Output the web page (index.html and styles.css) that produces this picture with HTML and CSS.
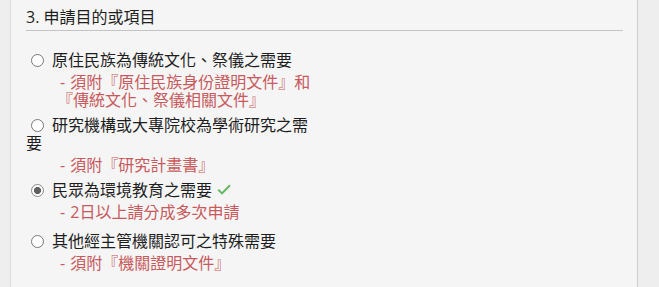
FILE: index.html
```html
<!DOCTYPE html>
<html lang="zh-Hant">
<head>
<meta charset="utf-8">
<title>申請目的或項目</title>
<link rel="stylesheet" href="styles.css">
</head>
<body>
<div class="page">
  <section class="panel">
    <h3 class="panel-title">3. 申請目的或項目</h3>
    <div class="options">
      <div class="item">
        <label class="opt"><input class="radio" type="radio" name="purpose">原住民族為傳統文化、祭儀之需要</label>
        <div class="note">- 須附『原住民族身份證明文件』和『傳統文化、祭儀相關文件』</div>
      </div>
      <div class="item">
        <label class="opt"><input class="radio" type="radio" name="purpose">研究機構或大專院校為學術研究之需要</label>
        <div class="note">- 須附『研究計畫書』</div>
      </div>
      <div class="item item-selected">
        <label class="opt"><input class="radio" type="radio" name="purpose" checked>民眾為環境教育之需要<svg class="check" width="14" height="11" viewBox="0 0 14 11"><path d="M1.2 5.6 L5 9.4 L13 1.2" fill="none" stroke="#62b65f" stroke-width="2"/></svg></label>
        <div class="note">- 2日以上請分成多次申請</div>
      </div>
      <div class="item">
        <label class="opt"><input class="radio" type="radio" name="purpose">其他經主管機關認可之特殊需要</label>
        <div class="note">- 須附『機關證明文件』</div>
      </div>
    </div>
  </section>
</div>
</body>
</html>
```

FILE: styles.css
```css
html, body {
  margin: 0;
  padding: 0;
  background: #eeeeee;
}

body {
  font-family: "Open Sans", "Noto Sans CJK TC", sans-serif;
  font-size: 16px;
  color: #222222;
}

.page {
  padding-left: 10px;
  width: 628px;
  height: 287px;
  overflow: hidden;
}

.panel {
  box-sizing: border-box;
  width: 628px;
  min-height: 287px;
  background: #f5f5f5;
  border-left: 1px solid #dcdcdc;
  border-right: 1px solid #cfcfcf;
  padding: 6px 14px 0 15px;
}

.panel-title {
  margin: 0;
  font-size: 16px;
  font-weight: normal;
  line-height: 22px;
  padding-bottom: 2px;
  border-bottom: 1px solid #c4c4c4;
  color: #1e1e1e;
}

.options {
  width: 290px;
  padding-top: 20px;
}

.item {
  margin-bottom: 7px;
}

.item-selected {
  margin-bottom: 11px;
}

.opt {
  display: block;
  line-height: 18px;
  color: #1e1e1e;
}

.radio {
  -webkit-appearance: none;
  appearance: none;
  box-sizing: border-box;
  width: 13px;
  height: 13px;
  margin: 0 8px 0 5px;
  vertical-align: -1px;
  border: 1px solid #777777;
  border-radius: 50%;
  background: #ffffff;
}

.radio:checked {
  border-color: #8a8a8a;
  background: radial-gradient(circle, #606060 0, #606060 3.3px, #ffffff 3.8px);
}

.check {
  margin-left: 5px;
  vertical-align: 1px;
}

.note {
  margin-top: 4px;
  padding-left: 31px;
  text-indent: 3px;
  word-spacing: 1px;
  line-height: 18px;
  color: #c75a5c;
}
```
